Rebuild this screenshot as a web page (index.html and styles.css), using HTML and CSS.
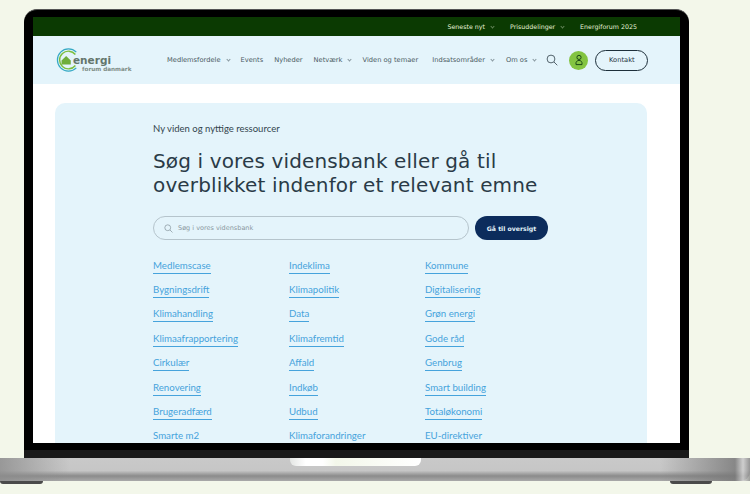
FILE: index.html
```html
<!DOCTYPE html>
<html lang="en">

<head>
    <meta charset="UTF-8">
    <meta name="viewport" content="width=device-width, initial-scale=1.0">
    <title>Energi Forum Danmark</title>
    <link rel="stylesheet" href="styles.css">
</head>

<body>
    <!-- Laptop lid with the website inside -->
    <div class="lid">
        <div class="screen">
            <div class="topbar">
                <a>Seneste nyt<span class="caret"></span></a>
                <a>Prisuddelinger<span class="caret"></span></a>
                <a>Energiforum 2025</a>
            </div>

            <div class="nav">
                <div class="logo">
                    <svg class="logo-mark" width="28" height="24" viewBox="0 0 30 26">
                        <path d="M24 4.5A12 12 0 1 0 24 21.5" fill="none" stroke="#35a9c4" stroke-width="1.3"/>
                        <path d="M23 7A9.6 9.6 0 1 0 23 19" fill="none" stroke="#7cbf3f" stroke-width="1.6"/>
                        <path d="M8 13.5L13 8.8L18 13.5V18H8Z" fill="#6fae3c"/>
                    </svg>
                    <div class="logo-text">
                        <span class="logo-top">energi</span>
                        <span class="logo-sub">forum danmark</span>
                    </div>
                </div>

                <div class="menu">
                    <a>Medlemsfordele<span class="caret"></span></a>
                    <a>Events</a>
                    <a>Nyheder</a>
                    <a>Netværk<span class="caret"></span></a>
                    <a class="gap-lg">Viden og temaer</a>
                    <a class="gap-sm">Indsatsområder<span class="caret"></span></a>
                    <a>Om os<span class="caret"></span></a>
                </div>

                <svg class="search-icon" width="12" height="12" viewBox="0 0 12 12">
                    <circle cx="5" cy="5" r="3.9" fill="none" stroke="#44535c" stroke-width="0.9"/>
                    <path d="M8 8L11.3 11.3" stroke="#44535c" stroke-width="0.9"/>
                </svg>

                <div class="user">
                    <svg width="10" height="12" viewBox="0 0 10 12">
                        <circle cx="5" cy="3.4" r="2.1" fill="none" stroke="#1c4a16" stroke-width="1"/>
                        <path d="M2 10.6C1.4 7.6 3.4 6.4 5 6.4C6.6 6.4 8.6 7.6 8 10.6Z" fill="none" stroke="#1c4a16" stroke-width="1"/>
                    </svg>
                </div>

                <a class="contact">Kontakt</a>
            </div>

            <div class="page">
                <div class="card">
                    <p class="kicker">Ny viden og nyttige ressourcer</p>
                    <h1>Søg i vores vidensbank eller gå til overblikket indenfor et relevant emne</h1>

                    <div class="search-row">
                        <div class="search-box">
                            <svg width="9" height="9" viewBox="0 0 12 12">
                                <circle cx="5" cy="5" r="3.9" fill="none" stroke="#8a98a0" stroke-width="1"/>
                                <path d="M8 8L11.3 11.3" stroke="#8a98a0" stroke-width="1"/>
                            </svg>
                            <span>Søg i vores vidensbank</span>
                        </div>
                        <a class="overview-btn">Gå til oversigt</a>
                    </div>

                    <div class="topics">
                        <a>Medlemscase</a><a>Indeklima</a><a>Kommune</a>
                        <a>Bygningsdrift</a><a>Klimapolitik</a><a>Digitalisering</a>
                        <a>Klimahandling</a><a>Data</a><a>Grøn energi</a>
                        <a>Klimaafrapportering</a><a>Klimafremtid</a><a>Gode råd</a>
                        <a>Cirkulær</a><a>Affald</a><a>Genbrug</a>
                        <a>Renovering</a><a>Indkøb</a><a>Smart building</a>
                        <a>Brugeradfærd</a><a>Udbud</a><a>Totaløkonomi</a>
                        <a>Smarte m2</a><a>Klimaforandringer</a><a>EU-direktiver</a>
                    </div>
                </div>
            </div>
        </div>
        <div class="chin"></div>
    </div>

    <!-- Laptop base -->
    <div class="base">
        <div class="notch"></div>
    </div>
    <div class="feet">
        <div class="foot foot-left"></div>
        <div class="foot foot-right"></div>
    </div>
</body>

</html>
```

FILE: styles.css
```css
body {
    margin: 0;
    height: 494px;
    overflow: hidden;
    background-color: #f3f7ea;
    font-family: "DejaVu Sans", sans-serif;
}

a {
    white-space: nowrap;
}

/* Laptop */
.lid {
    box-sizing: border-box;
    width: 665px;
    height: 449px;
    margin: 9px 0 0 24px;
    padding: 7px 9px 0;
    background-color: #000;
    border-top: 1px solid #555;
    border-radius: 13px 13px 0 0;
    display: flex;
    flex-direction: column;
}

.screen {
    height: 426px;
    flex-shrink: 0;
    overflow: hidden;
    background-color: #fff;
}

.chin {
    flex: 1;
    margin: 7px -9px 0;
    background-color: #191919;
}

.base {
    position: relative;
    height: 23px;
    background: linear-gradient(#c9c9c9 0%, #c6c6c6 55%, #8b8b8b 78%, #a9a9a9 100%);
    border-radius: 0 0 9px 0;
}

/* Ends of the base get darker */
.base::before {
    content: "";
    position: absolute;
    inset: 0;
    background: linear-gradient(90deg, #8c8c8c 0, rgba(140, 140, 140, 0) 70px, rgba(140, 140, 140, 0) 660px, #777 735px, #d0d0d0 743px, #888 750px);
    opacity: 0.8;
}

.notch {
    position: absolute;
    left: 290px;
    top: 0;
    width: 131px;
    height: 8px;
    background: linear-gradient(90deg, #e4e6e4, #fff 12%, #fff 25%, #f3f7ea 35%, #fff 100%);
    border-radius: 0 0 6px 6px;
}

.feet {
    display: flex;
    justify-content: space-between;
    width: 712px;
}

.foot {
    height: 3px;
    background-color: #4a4a4a;
    border-radius: 0 0 8px 8px;
}

.foot-left {
    width: 43px;
}

.foot-right {
    width: 42px;
}

/* Small chevron after a menu item */
.caret {
    display: inline-block;
    box-sizing: border-box;
    width: 3px;
    height: 3px;
    margin-left: 6px;
    border-right: 1px solid currentColor;
    border-bottom: 1px solid currentColor;
    transform: translateY(-1px) rotate(45deg);
    opacity: 0.6;
}

/* Top bar */
.topbar {
    height: 19px;
    padding-right: 43px;
    background-color: #0b3a02;
    color: #e6f3d8;
    font-size: 6.3px;
    display: flex;
    align-items: center;
    justify-content: flex-end;
    gap: 16px;
}

.topbar .caret {
    opacity: 0.4;
}

/* Main navigation */
.nav {
    height: 48px;
    padding: 0 33px 0 21px;
    background-color: #e4f4fb;
    display: flex;
    align-items: center;
}

.logo {
    width: 113px;
    display: flex;
    align-items: center;
    flex-shrink: 0;
}

.logo-mark {
    margin-right: -9px;
}

.logo-text {
    display: flex;
    flex-direction: column;
    margin-top: 8px;
    color: #7c8b84;
    font-weight: bold;
}

.logo-top {
    font-size: 10.5px;
    line-height: 10px;
    color: #63756c;
}

.logo-sub {
    font-size: 5.7px;
    line-height: 8px;
    margin-left: 9px;
    white-space: nowrap;
}

.menu {
    display: flex;
    align-items: center;
    flex-shrink: 0;
    gap: 11px;
    color: #4a5a62;
    font-size: 6.7px;
}

.gap-lg {
    margin-right: 3px;
}

.gap-sm {
    margin-right: 1px;
}

.search-icon {
    margin-left: 10px;
    flex-shrink: 0;
}

.user {
    width: 19px;
    height: 19px;
    margin-left: 11px;
    flex-shrink: 0;
    border-radius: 50%;
    background-color: #83c441;
    display: flex;
    align-items: center;
    justify-content: center;
}

.contact {
    box-sizing: border-box;
    width: 53px;
    height: 21px;
    margin-left: 7px;
    flex-shrink: 0;
    border: 1px solid #1d2f3a;
    border-radius: 11px;
    color: #1d2f3a;
    font-size: 6.7px;
    display: flex;
    align-items: center;
    justify-content: center;
}

/* Content */
.page {
    padding: 19px 33px 0 22px;
}

.card {
    height: 400px;
    padding: 19px 0 0 98px;
    background-color: #e4f4fb;
    border-radius: 10px 10px 0 0;
}

.kicker {
    margin: 0 0 14px;
    color: #33444e;
    font-family: Lato, sans-serif;
    font-size: 9.5px;
    line-height: 13px;
}

h1 {
    width: 400px;
    margin: 0 0 19px;
    color: #2a3b47;
    font-size: 20px;
    font-weight: normal;
    line-height: 24px;
    letter-spacing: 0.14px;
}

.search-row {
    display: flex;
    align-items: center;
    gap: 6px;
    margin-bottom: 14px;
}

.search-box {
    box-sizing: border-box;
    width: 316px;
    height: 24px;
    padding-left: 10px;
    border: 1px solid #b5c4cc;
    border-radius: 12px;
    color: #8a98a0;
    font-size: 6.5px;
    display: flex;
    align-items: center;
    gap: 5px;
}

.overview-btn {
    width: 73px;
    height: 24px;
    border-radius: 12px;
    background-color: #0c2c5c;
    color: #e3f3fb;
    font-size: 6.2px;
    font-weight: bold;
    display: flex;
    align-items: center;
    justify-content: center;
}

.topics {
    display: grid;
    grid-template-columns: 136px 136px 136px;
    grid-auto-rows: 24.4px;
    justify-items: start;
    align-items: center;
    color: #46a3dc;
    font-family: Lato, sans-serif;
    font-size: 9.7px;
}

.topics a {
    line-height: 13px;
    padding-bottom: 1px;
    border-bottom: 1px solid #46a3dc;
}
```
